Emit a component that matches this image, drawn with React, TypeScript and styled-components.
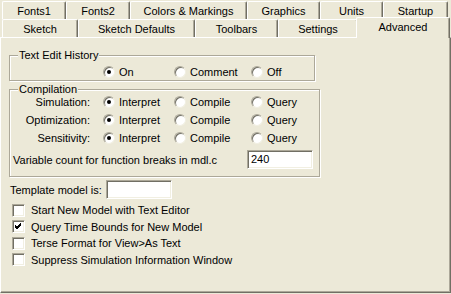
import React from 'react';
import styled, { createGlobalStyle } from 'styled-components';

const GlobalStyle = createGlobalStyle`
  body {
    margin: 0;
    background: #ece9d8;
    font-family: "Liberation Sans", Arial, sans-serif;
    font-size: 11px;
    color: #000;
  }
`;

const Dialog = styled.div`
  width: 451px;
  height: 294px;
  background: #ece9d8;
  overflow: hidden;
`;

const TabStrip = styled.div`
  padding: 2px 0 0 2px;
  display: flex;
  flex-direction: column;
`;

const TabRow = styled.div<{ $height: number }>`
  display: flex;
  height: ${(p) => p.$height}px;
  align-items: flex-end;
`;

const Tab = styled.div<{ $w: number; $active?: boolean }>`
  position: relative;
  box-sizing: border-box;
  width: ${(p) => p.$w + (p.$active ? 4 : 0)}px;
  height: ${(p) => (p.$active ? 21 : 18)}px;
  margin: ${(p) => (p.$active ? '0 -2px -1px -2px' : '0')};
  z-index: ${(p) => (p.$active ? 2 : 1)};
  background: #ece9d8;
  border-top: 1px solid #fff;
  border-left: 1px solid #fff;
  border-right: 1px solid #716f64;
  box-shadow: inset -1px 0 0 #aca899;
  border-radius: 2px 2px 0 0;
  display: flex;
  justify-content: center;
  padding-top: 3px;
  line-height: 13px;
`;

const Panel = styled.div`
  box-sizing: border-box;
  height: 256px;
  border-top: 1px solid #fff;
  border-left: 1px solid #fff;
  border-right: 1px solid #716f64;
  border-bottom: 1px solid #716f64;
  box-shadow: inset -1px -1px 0 #aca899;
  padding: 17px 0 0 8px;
  display: flex;
  flex-direction: column;
  align-items: flex-start;
`;

const GroupBox = styled.div<{ $w: number; $h: number; $top: number }>`
  position: relative;
  box-sizing: border-box;
  width: ${(p) => p.$w}px;
  height: ${(p) => p.$h}px;
  margin-top: ${(p) => p.$top}px;
  border: 1px solid #aca899;
  box-shadow: 1px 1px 0 #fff, inset 1px 1px 0 #fff;
  display: flex;
  flex-direction: column;
`;

const GroupTitle = styled.span`
  position: absolute;
  top: -7px;
  left: 8px;
  padding: 0 1px;
  background: #ece9d8;
  line-height: 13px;
`;

const OptionRow = styled.div<{ $pad: number; $top?: number }>`
  display: flex;
  align-items: center;
  height: 18px;
  padding-left: ${(p) => p.$pad}px;
  margin-top: ${(p) => p.$top ?? 0}px;
`;

const RowLabel = styled.span`
  width: 80px;
  text-align: right;
  margin-right: 13px;
`;

const Option = styled.label<{ $w: number }>`
  display: flex;
  align-items: center;
  width: ${(p) => p.$w}px;
  gap: 4px;
`;

const Radio = styled.span<{ $on?: boolean }>`
  position: relative;
  box-sizing: border-box;
  width: 12px;
  height: 12px;
  border-radius: 50%;
  background: #fff;
  border: 1px solid;
  border-color: #aca899 #f1efe2 #f1efe2 #aca899;
  box-shadow: inset 1px 1px 0 #716f64;
  flex: none;
  &::after {
    content: '';
    display: ${(p) => (p.$on ? 'block' : 'none')};
    position: absolute;
    left: 3px;
    top: 3px;
    width: 4px;
    height: 4px;
    border-radius: 50%;
    background: #000;
  }
`;

const VarRow = styled.div`
  display: flex;
  align-items: center;
  justify-content: space-between;
  margin-top: 3px;
  padding: 0 6px 0 3px;
`;

const TextBox = styled.div<{ $w: number }>`
  box-sizing: border-box;
  width: ${(p) => p.$w}px;
  height: 19px;
  background: #fff;
  border: 1px solid;
  border-color: #aca899 #fff #fff #aca899;
  box-shadow: inset 1px 1px 0 #716f64, inset -1px -1px 0 #f1efe2;
  padding: 2px 0 0 3px;
  line-height: 13px;
`;

const TemplateRow = styled.div`
  display: flex;
  align-items: center;
  margin-top: 3px;
  margin-left: 1px;
`;

const TemplateLabel = styled.span`
  width: 96px;
  white-space: nowrap;
`;

const CheckList = styled.div`
  display: flex;
  flex-direction: column;
  margin-top: 3px;
  margin-left: 3px;
`;

const CheckRow = styled.label`
  display: flex;
  align-items: center;
  height: 16.5px;
  gap: 6px;
`;

const Box = styled.span`
  box-sizing: border-box;
  width: 13px;
  height: 13px;
  background: #fff;
  border: 1px solid;
  border-color: #aca899 #fff #fff #aca899;
  box-shadow: inset 1px 1px 0 #716f64, inset -1px -1px 0 #f1efe2;
  display: flex;
  align-items: center;
  justify-content: center;
`;

const row1 = [
  ['Fonts1', 64],
  ['Fonts2', 64],
  ['Colors & Markings', 117],
  ['Graphics', 73],
  ['Units', 63],
  ['Startup', 65],
] as const;

const row2 = [
  ['Sketch', 76],
  ['Sketch Defaults', 117],
  ['Toolbars', 83],
  ['Settings', 80],
  ['Advanced', 90],
] as const;

const compRows = ['Simulation:', 'Optimization:', 'Sensitivity:'];

const checks = [
  ['Start New Model with Text Editor', false],
  ['Query Time Bounds for New Model', true],
  ['Terse Format for View>As Text', false],
  ['Suppress Simulation Information Window', false],
] as const;

const Check = ({ on }: { on: boolean }) => (
  <Box>
    {on && (
      <svg width="7" height="7" viewBox="0 0 7 7">
        <path d="M0 2 L2 4 L6 0 M0 3 L2 5 L6 1 M0 4 L2 6 L6 2" stroke="#000" strokeWidth="1" fill="none" shapeRendering="crispEdges" />
      </svg>
    )}
  </Box>
);

const App: React.FC = () => (
  <Dialog>
    <GlobalStyle />
    <TabStrip>
      <TabRow $height={17}>
        {row1.map(([t, w]) => (
          <Tab key={t} $w={w}>{t}</Tab>
        ))}
      </TabRow>
      <TabRow $height={18}>
        {row2.map(([t, w]) => (
          <Tab key={t} $w={w} $active={t === 'Advanced'}>{t}</Tab>
        ))}
      </TabRow>
    </TabStrip>
    <Panel>
      <GroupBox $w={306} $h={26} $top={0}>
        <GroupTitle>Text Edit History</GroupTitle>
        <OptionRow $pad={93} $top={7}>
          <Option $w={71}><Radio $on />On</Option>
          <Option $w={77}><Radio />Comment</Option>
          <Option $w={50}><Radio />Off</Option>
        </OptionRow>
      </GroupBox>
      <GroupBox $w={311} $h={88} $top={8}>
        <GroupTitle>Compilation</GroupTitle>
        {compRows.map((r, i) => (
          <OptionRow key={r} $pad={0} $top={i === 0 ? 3 : 0}>
            <RowLabel>{r}</RowLabel>
            <Option $w={71}><Radio $on />Interpret</Option>
            <Option $w={77}><Radio />Compile</Option>
            <Option $w={50}><Radio />Query</Option>
          </OptionRow>
        ))}
        <VarRow>
          <span>Variable count for function breaks in mdl.c</span>
          <TextBox $w={66}>240</TextBox>
        </VarRow>
      </GroupBox>
      <TemplateRow>
        <TemplateLabel>Template model is:</TemplateLabel>
        <TextBox $w={66} />
      </TemplateRow>
      <CheckList>
        {checks.map(([t, on]) => (
          <CheckRow key={t}>
            <Check on={on} />
            {t}
          </CheckRow>
        ))}
      </CheckList>
    </Panel>
  </Dialog>
);

export default App;
